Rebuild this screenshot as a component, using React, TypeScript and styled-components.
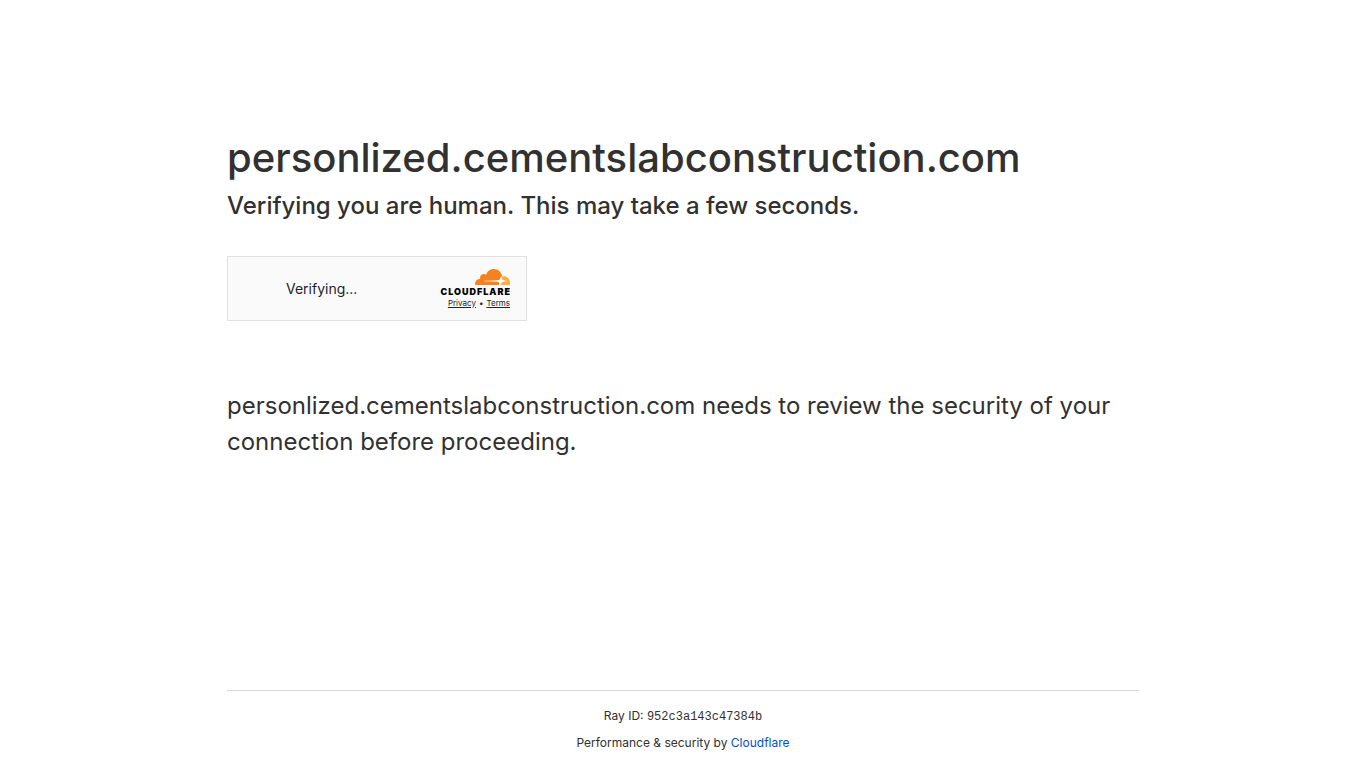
import React from "react";
import styled, { createGlobalStyle } from "styled-components";

const GlobalStyle = createGlobalStyle`
  *, *::before, *::after { box-sizing: border-box; margin: 0; padding: 0; }
  body {
    background: #fff;
    color: #313131;
    font-family: Inter, "Liberation Sans", sans-serif;
  }
`;

const Page = styled.div`
  display: flex;
  flex-direction: column;
  min-height: 100vh;
`;

const Main = styled.main`
  flex: 1;
  width: 100%;
  max-width: 960px;
  margin: 128px auto 0;
  padding: 0 24px;
`;

const Title = styled.h1`
  font-size: 40px;
  font-weight: 500;
  line-height: 60px;
  overflow-wrap: anywhere;
`;

const Subtitle = styled.h2`
  font-size: 24px;
  font-weight: 500;
  line-height: 36px;
`;

const Widget = styled.section`
  display: flex;
  align-items: center;
  justify-content: space-between;
  width: 300px;
  height: 65px;
  margin: 32px 0 67px;
  padding: 0 16px 0 58px;
  border: 1px solid #e0e0e0;
  background: #fafafa;
`;

const Status = styled.span`
  color: #232323;
  font-size: 14px;
  line-height: 20px;
`;

const Brand = styled.div`
  display: flex;
  flex-direction: column;
  align-items: flex-end;
  color: #232323;
`;

const Cloud = styled.svg`
  display: block;
  width: 35px;
  height: 17px;
`;

const Wordmark = styled.span`
  margin-right: -1px;
  color: #000;
  font-size: 9px;
  font-weight: 900;
  letter-spacing: 1px;
  line-height: 11px;
`;

const Legal = styled.div`
  display: flex;
  gap: 3px;
  font-size: 8px;
  line-height: 12px;
`;

const LegalLink = styled.a`
  color: #232323;
  text-decoration: underline;
`;

const Explanation = styled.p`
  font-size: 24px;
  line-height: 36px;
`;

const Footer = styled.footer`
  width: 100%;
  max-width: 960px;
  margin: 0 auto;
  padding: 0 24px;
  font-size: 12px;
  line-height: 18px;
`;

const FooterInner = styled.div`
  display: flex;
  flex-direction: column;
  align-items: center;
  gap: 9px;
  padding: 16px 0;
  border-top: 1px solid #d9d9d9;
`;

const RayCode = styled.code`
  font-family: "Liberation Mono", monospace;
  font-size: 12px;
  line-height: 1;
`;

const FooterLink = styled.a`
  color: #0051c3;
  text-decoration: none;
`;

function CloudIcon() {
  return (
    <Cloud viewBox="38 0 35 17" aria-hidden="true">
      <path
        fill="#F6821F"
        d="M61.885 15.784L62.063 15.158C62.276 14.413 62.197 13.724 61.84 13.218C61.512 12.752 60.965 12.477 60.301 12.445L47.72 12.284L47.48 12.065L47.786 11.72L60.483 11.557C61.989 11.486 63.62 10.246 64.19 8.734L64.915 6.814C64.944 6.732 64.951 6.644 64.934 6.56C64.112 2.807 60.812 0 56.865 0C53.229 0 50.142 2.382 49.035 5.692C48.286 5.122 47.354 4.86 46.423 4.958C44.679 5.134 43.276 6.559 43.103 8.33C43.059 8.772 43.092 9.218 43.199 9.649C40.35 9.733 38.065 12.103 38.065 15.015C38.065 15.275 38.084 15.535 38.121 15.792C38.129 15.851 38.158 15.906 38.203 15.945C38.247 15.985 38.304 16.007 38.364 16.007L61.589 16.01C61.73 16.005 61.84 15.92 61.885 15.784Z"
      />
      <path
        fill="#FBAD41"
        d="M66.076 6.953C65.959 6.953 65.843 6.956 65.727 6.962C65.64 6.97 65.57 7.03 65.546 7.109L65.052 8.843C64.839 9.588 64.918 10.277 65.275 10.783C65.603 11.249 66.15 11.523 66.814 11.555L69.496 11.72L69.76 12.02L69.45 12.28L66.66 12.445C65.15 12.516 63.52 13.756 62.95 15.269L62.75 15.81C62.71 15.91 62.78 16.01 62.89 16.01H72.48C72.6 16.01 72.7 15.94 72.73 15.83C72.91 15.2 73 14.54 73 13.87C73 10.05 69.9 6.953 66.076 6.953Z"
      />
      <path fill="#fff" fillOpacity="0.5" d="M46.5 12L62 11.2V12.8Z" />
      <path
        fill="#fff"
        d="M63.8 7.8L64.8 10.8L68.5 12L64.8 13.2L63.8 16.5L62.6 13.2L59 12L62.6 10.8Z"
      />
    </Cloud>
  );
}

export default function App() {
  return (
    <>
      <GlobalStyle />
      <Page>
        <Main>
          <Title>personlized.cementslabconstruction.com</Title>
          <Subtitle>Verifying you are human. This may take a few seconds.</Subtitle>
          <Widget aria-label="Security check">
            <Status role="status">Verifying...</Status>
            <Brand>
              <CloudIcon />
              <Wordmark>CLOUDFLARE</Wordmark>
              <Legal>
                <LegalLink href="#privacy">Privacy</LegalLink>
                <span>•</span>
                <LegalLink href="#terms">Terms</LegalLink>
              </Legal>
            </Brand>
          </Widget>
          <Explanation>
            personlized.cementslabconstruction.com needs to review the security of your connection
            before proceeding.
          </Explanation>
        </Main>
        <Footer>
          <FooterInner>
            <div>
              Ray ID: <RayCode>952c3a143c47384b</RayCode>
            </div>
            <div>
              Performance &amp; security by <FooterLink href="#cloudflare">Cloudflare</FooterLink>
            </div>
          </FooterInner>
        </Footer>
      </Page>
    </>
  );
}
